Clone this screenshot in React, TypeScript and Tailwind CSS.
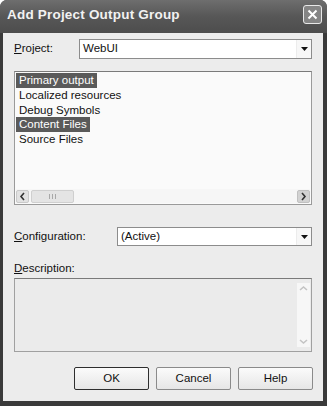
import React from "react";

const font = { fontFamily: '"Liberation Sans", Arial, sans-serif' };

function DownTri() {
  return (
    <svg width="7" height="4" viewBox="0 0 7 4">
      <path d="M0 0 H7 L3.5 4 Z" fill="#111" />
    </svg>
  );
}

function Combo({ value, className }: { value: string; className: string }) {
  return (
    <div className={"flex items-center bg-white border border-[#8c8c8c] " + className}>
      <div className="flex-1 pl-[3px] text-[11.5px] text-[#111] leading-none">{value}</div>
      <div className="w-[15px] h-full flex items-center justify-center bg-[#f7f7f7] border-l border-[#ececec]">
        <DownTri />
      </div>
    </div>
  );
}

function Chevron({ dir, color }: { dir: "l" | "r" | "u" | "d"; color: string }) {
  const d =
    dir === "l"
      ? "M5 1 L2 4.5 L5 8"
      : dir === "r"
      ? "M2 1 L5 4.5 L2 8"
      : dir === "u"
      ? "M1 5 L4.5 2 L8 5"
      : "M1 2 L4.5 5 L8 2";
  const w = dir === "l" || dir === "r" ? 7 : 9;
  const h = dir === "l" || dir === "r" ? 9 : 7;
  return (
    <svg width={w} height={h} viewBox={`0 0 ${w} ${h}`}>
      <path d={d} fill="none" stroke={color} strokeWidth="1.6" />
    </svg>
  );
}

function Button({ label, def }: { label: string; def?: boolean }) {
  return (
    <div
      className={
        "w-[75px] h-[23px] flex items-center justify-center text-[11.5px] text-[#111] bg-gradient-to-b from-[#fbfbfb] to-[#e6e6e6] rounded-[2px] " +
        (def ? "border border-[#2e2e2e]" : "border border-[#8a8a8a]")
      }
    >
      {label}
    </div>
  );
}

export default function App() {
  const items = [
    { t: "Primary output", sel: true },
    { t: "Localized resources", sel: false },
    { t: "Debug Symbols", sel: false },
    { t: "Content Files", sel: true },
    { t: "Source Files", sel: false },
  ];
  return (
    <div className="w-[327px] h-[406px] flex flex-col bg-[#3a3a3a] rounded-t-[7px] overflow-hidden" style={font}>
      {/* Title bar */}
      <div className="h-[33px] flex items-start justify-between bg-gradient-to-b from-[#6e6e6e] via-[#575757] to-[#4d4d4d] pl-[7px] pr-[5px]">
        <div className="mt-[7px] text-[13.5px] font-bold text-[#f2f2f2] tracking-[0.2px] leading-[16px]">
          Add Project Output Group
        </div>
        <div className="mt-[5px] w-[19px] h-[19px] rounded-[3px] border border-[#e8e8e8] bg-[#858585] flex items-center justify-center">
          <svg width="11" height="11" viewBox="0 0 11 11">
            <path d="M1.5 1.5 L9.5 9.5 M9.5 1.5 L1.5 9.5" stroke="#fff" strokeWidth="2" />
          </svg>
        </div>
      </div>

      {/* Body */}
      <div className="flex-1 flex flex-col bg-[#ececec] ml-[3px] mr-[4px] mb-[5px] px-[11px]">
        {/* Project row */}
        <div className="mt-[6px] h-[20px] flex items-center">
          <div className="w-[65px] text-[11.5px] text-[#111]">
            <span className="underline">P</span>roject:
          </div>
          <Combo value="WebUI" className="flex-1 h-[20px]" />
        </div>

        {/* List box */}
        <div className="mt-[12px] h-[134px] flex flex-col bg-[#fafafa] border border-[#9a9a9a] border-t-[#7a7a7a]">
          <div className="flex-1 flex flex-col pt-[1px] pl-[1px]">
            {items.map((it) => (
              <div key={it.t} className="h-[14.75px] flex items-center">
                <span
                  className={
                    "text-[11.5px] leading-[14.75px] px-[3px] " +
                    (it.sel ? "bg-[#5a5a5a] text-white" : "text-[#111]")
                  }
                >
                  {it.t}
                </span>
              </div>
            ))}
          </div>
          {/* Horizontal scrollbar */}
          <div className="h-[14px] mb-[1px] mx-[1px] flex items-center bg-[#f6f6f6]">
            <div className="w-[13px] h-[13px] flex items-center justify-center bg-[#e2e2e2] border border-[#c9c9c9] rounded-[2px]">
              <Chevron dir="l" color="#333" />
            </div>
            <div className="ml-[2px] w-[43px] h-[13px] flex items-center justify-center bg-[#e4e4e4] border border-[#cfcfcf] rounded-[2px]">
              <svg width="7" height="5" viewBox="0 0 7 5">
                <path d="M0.5 0 V5 M3.5 0 V5 M6.5 0 V5" stroke="#a8a8a8" strokeWidth="1" />
              </svg>
            </div>
            <div className="flex-1" />
            <div className="w-[13px] h-[13px] flex items-center justify-center bg-[#d2d2d2] border border-[#c0c0c0] rounded-[2px]">
              <Chevron dir="r" color="#333" />
            </div>
          </div>
        </div>

        {/* Configuration row */}
        <div className="mt-[22px] h-[19px] flex items-center">
          <div className="w-[103px] text-[11.5px] text-[#111]">
            <span className="underline">C</span>onfiguration:
          </div>
          <Combo value="(Active)" className="flex-1 h-[19px]" />
        </div>

        {/* Description */}
        <div className="mt-[16px] h-[13px] text-[11.5px] leading-[13px] text-[#111]">
          <span className="underline">D</span>escription:
        </div>
        <div className="mt-[3px] h-[74px] flex justify-end bg-[#ebebeb] border border-[#a0a0a0] border-t-[#7a7a7a] pr-[1px] py-[4px]">
          <div className="w-[13px] flex flex-col bg-[#f7f7f7]">
            <div className="h-[11px] flex items-center justify-center">
              <Chevron dir="u" color="#c4c4c4" />
            </div>
            <div className="flex-1" />
            <div className="h-[11px] flex items-center justify-center">
              <Chevron dir="d" color="#c4c4c4" />
            </div>
          </div>
        </div>

        {/* Buttons */}
        <div className="mt-[15px] flex justify-end gap-[7px] -mr-[1px]">
          <Button label="OK" def />
          <Button label="Cancel" />
          <Button label="Help" />
        </div>
      </div>
    </div>
  );
}
